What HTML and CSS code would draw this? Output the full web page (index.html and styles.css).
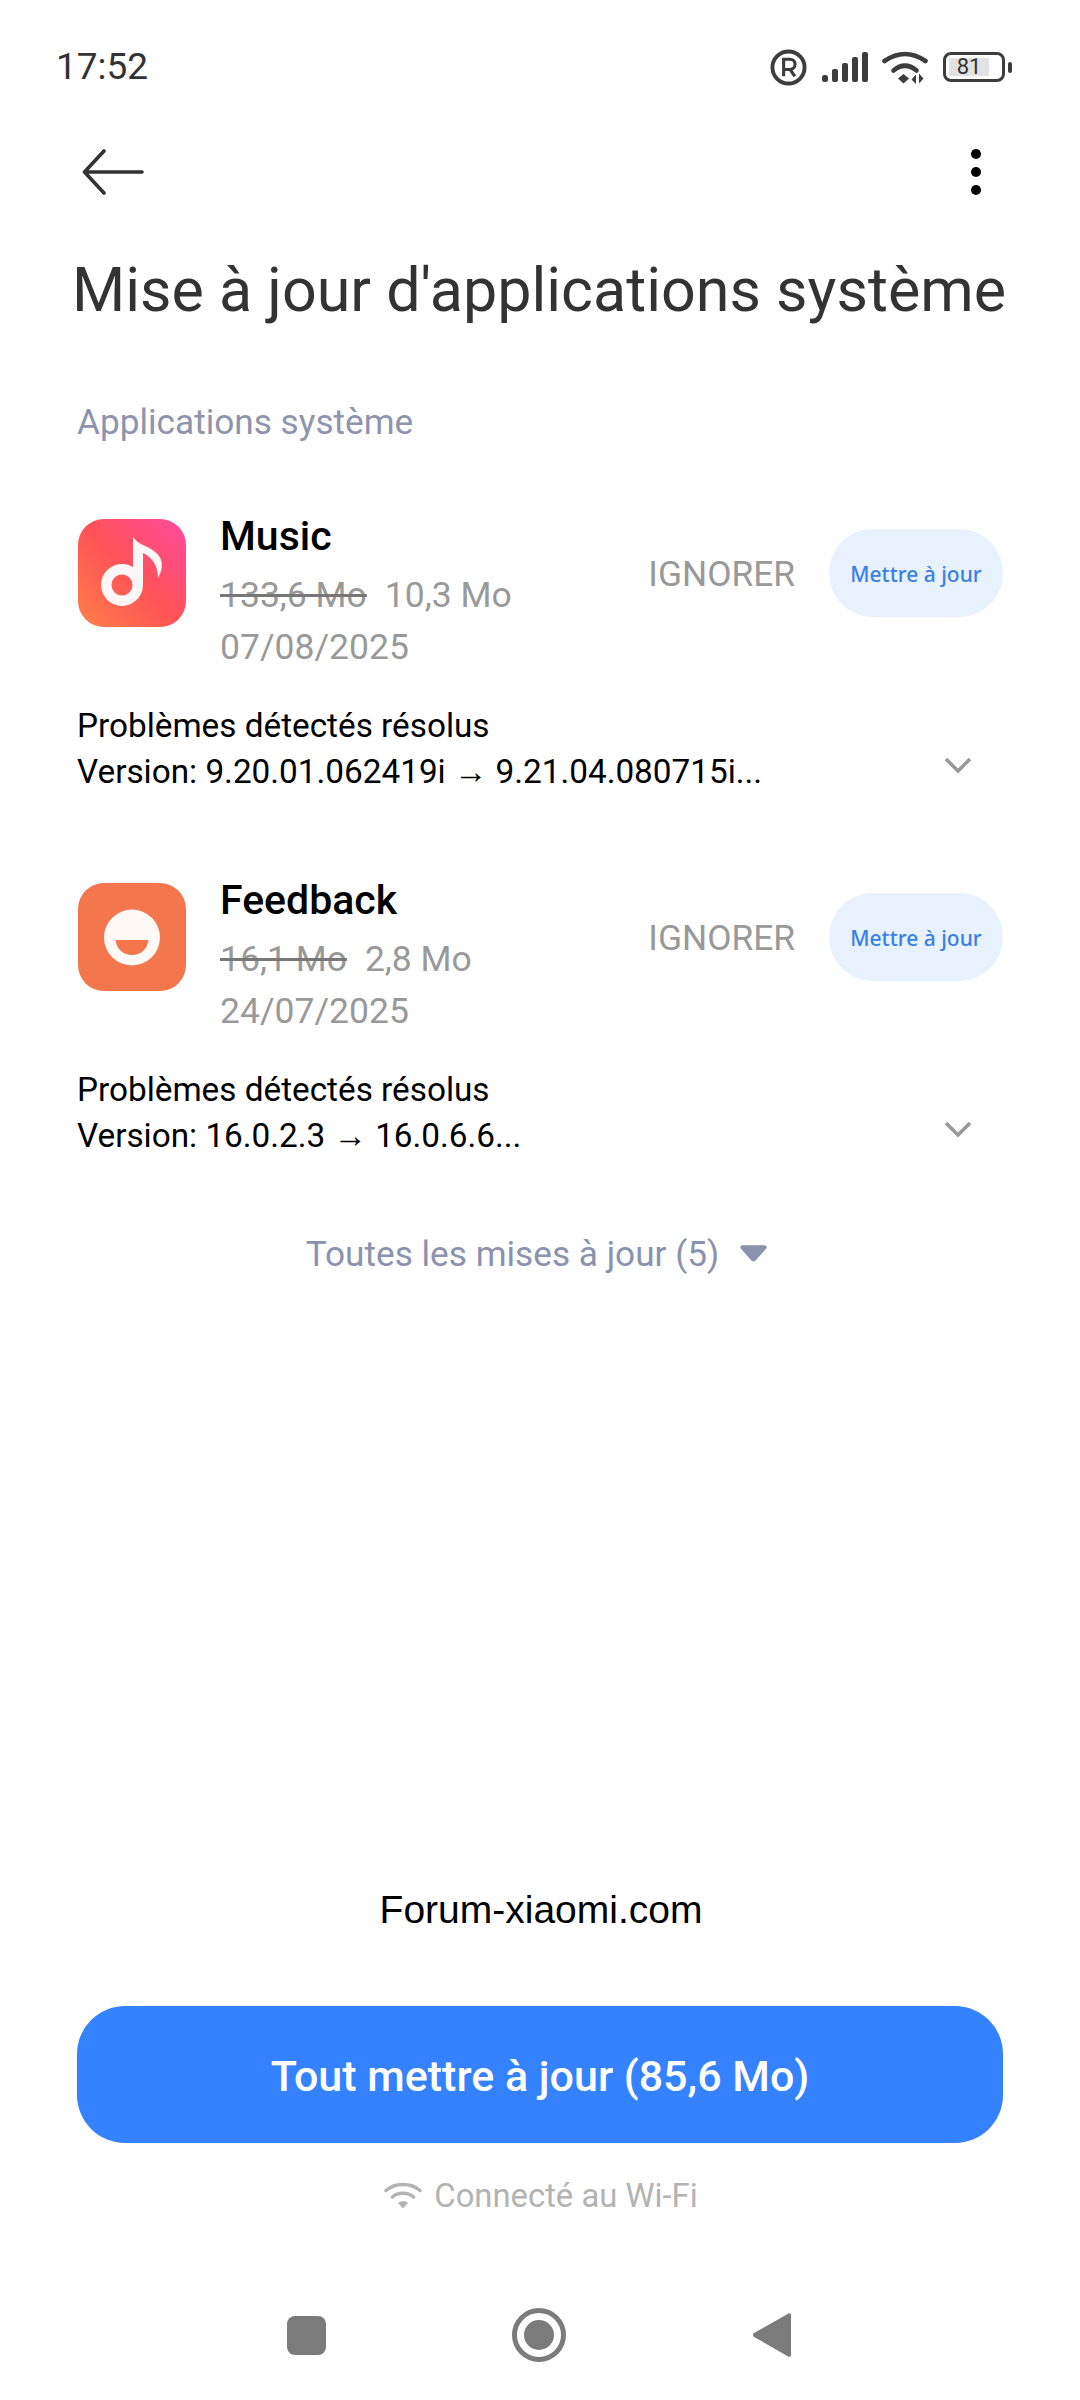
FILE: index.html
```html
<!DOCTYPE html>
<html lang="fr">
<head>
<meta charset="utf-8">
<title>Mise à jour d'applications système</title>
<link rel="stylesheet" href="styles.css">
</head>
<body>
<div class="page">
  <div class="status">
    <span class="time">17:52</span>
    <div class="status-icons">
      <svg class="ic-r" viewBox="0 0 38 38"><circle cx="19" cy="19" r="16.500" fill="none" stroke="#3d3d3d" stroke-width="4"/><path d="M14 28V10.500h6.500a5 5 0 0 1 0 10.500H14M20.500 21l5 7" fill="none" stroke="#3d3d3d" stroke-width="3.200"/></svg>
      <svg class="ic-sig" viewBox="0 0 46 30"><g fill="#3d3d3d"><rect x="0" y="23" width="6" height="7" rx="2.500"/><rect x="10" y="17" width="6" height="13" rx="2"/><rect x="20" y="11" width="6" height="19" rx="2"/><rect x="30" y="5" width="6" height="25" rx="2"/><rect x="40" y="0" width="6" height="30" rx="2"/></g></svg>
      <svg class="ic-wifi" viewBox="0 0 46 33"><g fill="none" stroke="#3d3d3d" stroke-width="4.600" stroke-linecap="round"><path d="M2.500 10Q23-4 43.500 10"/><path d="M11.500 19.500Q23 10 34.500 19.500"/></g><path d="M16 27.500l5.500-4.500 5.500 4.500-5.500 5z" fill="#3d3d3d"/><path d="M34 33V23.500l-4.500 5zM37 22.500v10l4.500-5z" fill="#3d3d3d"/></svg>
      <div class="battery"><span class="batt-fill">81</span></div>
      <span class="batt-tip"></span>
    </div>
  </div>

  <div class="toolbar">
    <svg class="ic-back" viewBox="0 0 62 46"><path d="M60 23H3M22 2 2.500 23 22 44" fill="none" stroke="#333" stroke-width="3.600" stroke-linecap="round" stroke-linejoin="round"/></svg>
    <div class="dots"><i></i><i></i><i></i></div>
  </div>

  <h1 class="title">Mise à jour d'applications système</h1>
  <div class="section">Applications système</div>

  <div class="app">
    <div class="app-row">
      <svg class="app-icon" viewBox="0 0 108 108">
        <defs>
          <linearGradient id="mg" x1="0" y1="1" x2="1" y2="0"><stop offset="0" stop-color="#ff8048"/><stop offset=".5" stop-color="#ff5257"/><stop offset="1" stop-color="#ff4aa0"/></linearGradient>
        </defs>
        <rect width="108" height="108" rx="26" fill="url(#mg)"/>
        <path d="M55 17C58 24 66 26 73 30C83 36 88 45 80 59C80 47 74 38 65 34V66A21 21 0 1 1 55 48ZM44 55.500a10.500 10.500 0 1 0 0 21a10.500 10.500 0 0 0 0-21Z" fill="#fdf6f6" fill-rule="evenodd"/>
      </svg>
      <div class="app-info">
        <div class="app-name">Music</div>
        <div class="app-size"><s>133,6 Mo</s><span>10,3 Mo</span></div>
        <div class="app-date">07/08/2025</div>
      </div>
      <span class="ignore">IGNORER</span>
      <span class="update">Mettre à jour</span>
    </div>
    <div class="notes">
      <div class="notes-text">Problèmes détectés résolus<br>Version: 9.20.01.062419i → 9.21.04.080715i...</div>
      <svg class="chev" viewBox="0 0 28 18"><path d="M2 3l12 12L26 3" fill="none" stroke="#999" stroke-width="3.600"/></svg>
    </div>
  </div>

  <div class="app">
    <div class="app-row">
      <svg class="app-icon" viewBox="0 0 108 108">
        <rect width="108" height="108" rx="26" fill="#f3764d"/>
        <circle cx="54" cy="54.500" r="28" fill="#fff9f5"/>
        <path d="M37.500 57h33c-1 9-8 15-16.500 15s-15.500-6-16.500-15z" fill="#f3764d"/>
      </svg>
      <div class="app-info">
        <div class="app-name">Feedback</div>
        <div class="app-size"><s>16,1 Mo</s><span>2,8 Mo</span></div>
        <div class="app-date">24/07/2025</div>
      </div>
      <span class="ignore">IGNORER</span>
      <span class="update">Mettre à jour</span>
    </div>
    <div class="notes">
      <div class="notes-text">Problèmes détectés résolus<br>Version: 16.0.2.3 → 16.0.6.6...</div>
      <svg class="chev" viewBox="0 0 28 18"><path d="M2 3l12 12L26 3" fill="none" stroke="#999" stroke-width="3.600"/></svg>
    </div>
  </div>

  <div class="all">
    <span>Toutes les mises à jour (5)</span>
    <svg class="tri" viewBox="0 0 28 18"><path d="M2.500 0h23c2 0 3 2 1.500 3.500L16 16c-1 1-3 1-4 0L1 3.500C-.5 2 .5 0 2.500 0z" fill="#8b92ad"/></svg>
  </div>

  <div class="spacer"></div>

  <div class="forum">Forum-xiaomi.com</div>
  <div class="cta">Tout mettre à jour (85,6 Mo)</div>
  <div class="conn">
    <svg class="ic-conn" viewBox="0 0 38 28"><g fill="none" stroke="#b3b3b3" stroke-width="3.400" stroke-linecap="round"><path d="M2 8.500C11 .5 27 .5 36 8.500"/><path d="M8.500 15C14 10 24 10 29.500 15"/></g><path d="M14 21c3-2.500 7-2.500 10 0l-5 5.500z" fill="#b3b3b3"/></svg>
    <span>Connecté au Wi-Fi</span>
  </div>

  <div class="nav">
    <span class="nav-square"></span>
    <span class="nav-circle"><i></i></span>
    <svg class="nav-back" viewBox="0 0 40 48"><path d="M37 1.500c1.500-1 3 0 3 1.500v42c0 1.500-1.500 2.500-3 1.500L1 26c-1.300-1-1.300-3 0-4z" fill="#7b7b7b"/></svg>
  </div>
</div>
</body>
</html>
```
FILE: styles.css
```css
* { box-sizing: border-box; }
html, body { margin: 0; padding: 0; background: #fff; }
body { font-family: Roboto, "Noto Sans", sans-serif; }
.page { width: 1080px; height: 2400px; display: flex; flex-direction: column; overflow: hidden; }

.status { height: 134px; padding: 44px 68px 0 56px; display: flex; justify-content: space-between; align-items: flex-start; }
.time { font-size: 37px; line-height: 46px; color: #333; }
.status-icons { display: flex; align-items: center; height: 46px; }
.ic-r { width: 37px; height: 37px; }
.ic-sig { width: 46px; height: 30px; margin-left: 15px; }
.ic-wifi { width: 46px; height: 33px; margin-left: 14px; }
.battery { width: 62px; height: 30px; margin-left: 15px; border: 3px solid #3d3d3d; border-radius: 8px; padding: 3px; }
.batt-fill { display: block; width: 40px; height: 18px; background: #e2e2e2; color: #333; font-size: 22px; line-height: 18px; text-align: center; }
.batt-tip { width: 4px; height: 11px; margin-left: 3px; background: #3d3d3d; border-radius: 2px; }

.toolbar { display: flex; justify-content: space-between; align-items: center; height: 76px; padding: 0 99px 0 82px; }
.ic-back { width: 62px; height: 46px; }
.dots { display: flex; flex-direction: column; gap: 8px; }
.dots i { display: block; width: 10px; height: 10px; border-radius: 50%; background: #000; }

.title { margin: 40px 0 0 72px; font-weight: 400; font-size: 61px; line-height: 80px; color: #333; white-space: nowrap; }
.section { margin: 70px 0 0 77px; font-size: 35.200px; line-height: 44px; color: #8e94ad; }

.app { padding: 0 77px; }
.section + .app { margin-top: 75px; }
.app + .app { margin-top: 88px; }
.app-row { display: flex; align-items: flex-start; height: 184px; }
.app-icon { width: 108px; height: 108px; flex: none; margin-left: 1px; }
.app-info { flex: 1; margin-left: 34px; margin-top: -8px; }
.app-name { font-size: 41px; line-height: 50px; margin-bottom: 7px; font-weight: 500; color: #000; }
.app-size, .app-date { font-size: 35.500px; line-height: 54px; color: #999; white-space: nowrap; }
.app-date { margin-top: -2px; }
.app-size s { color: #999; text-decoration-color: #777; }
.app-size span { margin-left: 18px; }
.ignore { font-size: 35.300px; line-height: 88px; color: #999; margin: 11px 34px 0 0; }
.update { width: 174px; height: 88px; margin-top: 10px; border-radius: 44px; background: #e8f1fe; color: #3a80e4; font-family: "Noto Sans", sans-serif; font-size: 21px; font-weight: 500; line-height: 90px; text-align: center; white-space: nowrap; }

.notes { display: flex; justify-content: space-between; align-items: flex-end; }
.notes-text { font-size: 33.300px; line-height: 46px; color: #000; }
.chev { width: 28px; height: 18px; margin: 0 31px 21px 0; }

.all { display: flex; justify-content: center; align-items: center; gap: 21px; margin-top: 72px; padding-right: 7px; font-size: 35.200px; line-height: 46px; color: #8b92ad; }
.tri { width: 27px; height: 18px; }

.spacer { flex: 1; }

.forum { font-family: "Liberation Sans", Arial, sans-serif; font-size: 39px; line-height: 46px; color: #000; text-align: center; padding-left: 2px; }
.cta { margin: 73px 77px 0; height: 137px; border-radius: 48px; background: #3482ff; color: #fff; font-size: 43px; font-weight: 500; line-height: 140px; text-align: center; }
.conn { display: flex; justify-content: center; align-items: center; gap: 12px; margin-top: 31px; padding-left: 2px; font-size: 32.800px; line-height: 44px; color: #b3b3b3; }
.ic-conn { width: 38px; height: 28px; }

.nav { display: flex; justify-content: center; align-items: center; height: 100px; margin-top: 82px; padding: 0 2px 30px 0; }
.nav-square { width: 39px; height: 39px; border-radius: 8px; background: #7b7b7b; }
.nav-circle { width: 54px; height: 54px; margin-left: 186px; border: 5px solid #7b7b7b; border-radius: 50%; display: flex; align-items: center; justify-content: center; }
.nav-circle i { display: block; width: 30px; height: 30px; border-radius: 50%; background: #7b7b7b; }
.nav-back { width: 38px; height: 46px; margin-left: 187px; }
```
